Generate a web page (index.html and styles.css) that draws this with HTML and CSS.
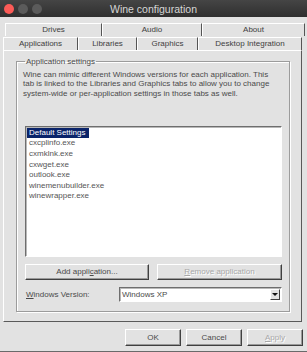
FILE: index.html
```html
<!DOCTYPE html>
<html lang="en">
<head>
    <meta charset="UTF-8">
    <meta name="viewport" content="width=device-width, initial-scale=1.0">
    <title>Wine configuration</title>
    <link rel="stylesheet" href="styles.css">
</head>
<body>
    <div class="window">
        <div class="titlebar">
            <div class="lights">
                <span class="light close"></span>
                <span class="light"></span>
                <span class="light"></span>
            </div>
            <div class="title">Wine configuration</div>
            <div></div>
        </div>

        <div class="tabs">
            <div class="tab-row back">
                <div class="tab drives">Drives</div>
                <div class="tab audio">Audio</div>
                <div class="tab about">About</div>
            </div>
            <div class="tab-row front">
                <div class="tab active applications">Applications</div>
                <div class="tab libraries">Libraries</div>
                <div class="tab graphics">Graphics</div>
                <div class="tab desktop">Desktop Integration</div>
            </div>
        </div>

        <div class="panel">
            <fieldset class="group">
                <legend>Application settings</legend>
                <p class="desc">Wine can mimic different Windows versions for each application. This<br>tab is linked to the Libraries and Graphics tabs to allow you to change<br>system-wide or per-application settings in those tabs as well.</p>
                <ul class="app-list">
                    <li><span class="selected">Default Settings</span></li>
                    <li><span>cxcplinfo.exe</span></li>
                    <li><span>cxmklnk.exe</span></li>
                    <li><span>cxwget.exe</span></li>
                    <li><span>outlook.exe</span></li>
                    <li><span>winemenubuilder.exe</span></li>
                    <li><span>winewrapper.exe</span></li>
                </ul>
                <div class="app-buttons">
                    <button class="btn add">Add appli<u>c</u>ation...</button>
                    <button class="btn remove" disabled><u>R</u>emove application</button>
                </div>
                <div class="version-row">
                    <label><u>W</u>indows Version:</label>
                    <div class="combo">
                        <span class="combo-value">Windows XP</span>
                        <span class="combo-arrow"></span>
                    </div>
                </div>
            </fieldset>
        </div>

        <div class="dialog-buttons">
            <button class="btn ok">OK</button>
            <button class="btn cancel">Cancel</button>
            <button class="btn apply" disabled><u>A</u>pply</button>
        </div>
    </div>
</body>
</html>
```

FILE: styles.css
```css
body {
    margin: 0;
    background: #e2e2e2;
    font-family: "Liberation Sans", Arial, sans-serif;
    font-size: 8px;
    color: #4a4a4a;
}

.window {
    width: 307px;
    height: 352px;
    box-sizing: border-box;
    background: #e2e2e2;
    border-bottom: 1px solid #6a6a6a;
    display: flex;
    flex-direction: column;
}

/* title bar */
.titlebar {
    height: 17px;
    display: grid;
    grid-template-columns: 1fr auto 1fr;
    align-items: center;
    background: linear-gradient(#454545, #2f2f2f);
}

.lights {
    display: flex;
    gap: 4px;
    padding-left: 4px;
}

.light {
    width: 10px;
    height: 10px;
    border-radius: 50%;
    background: #5b5b5b;
}

.light.close { background: #fc5b57; }

.title {
    font-size: 10.5px;
    color: #d6d6d6;
}

/* tabs */
.tabs {
    padding-top: 6px;
}

.tab-row {
    display: flex;
    height: 13px;
}

.tab-row.back { margin: 0 2px 0 5px; }
.tab-row.front { margin: 1px 5px 0 3px; }

.tab {
    box-sizing: border-box;
    border-top: 1px solid #fff;
    border-left: 1px solid #fff;
    border-right: 1px solid #555;
    text-align: center;
    line-height: 12px;
    color: #404040;
}

.drives { width: 97px; }
.audio { width: 100px; }
.about { width: 103px; }
.applications { width: 75px; }
.libraries { width: 59px; }
.graphics { width: 61px; }
.desktop { width: 104px; }

/* panel */
.panel {
    margin: 0 5px 0 3px;
    height: 272px;
    box-sizing: border-box;
    border: 1px solid;
    border-color: #fff #5a5a5a #5a5a5a #fff;
}

.group {
    margin: 6px 11px 0 12px;
    padding: 0 6px;
    height: 255px;
    box-sizing: border-box;
    border: 1px solid #9c9c9c;
    box-shadow: inset 1px 1px 0 #fff, 1px 1px 0 #fff;
}

.group legend {
    margin-left: 2px;
    padding: 0 1px;
    line-height: 9px;
}

.desc {
    margin: 4px 0 0;
    line-height: 9.3px;
}

.app-list {
    list-style: none;
    margin: 28px 1px 0 2px;
    padding: 1px 0 0;
    height: 131px;
    box-sizing: border-box;
    background: #fff;
    border: 1px solid;
    border-color: #6e6e6e #fff #fff #6e6e6e;
    box-shadow: inset 1px 1px 0 #b8b8b8;
    color: #555;
}

.app-list li {
    height: 10.6px;
    line-height: 10.6px;
    padding-left: 1px;
}

.app-list span {
    display: inline-block;
    padding: 0 2px;
}

.app-list .selected {
    padding-right: 4px;
    background: #0a246a;
    color: #fff;
}

/* buttons */
.btn {
    box-sizing: border-box;
    margin: 0;
    padding: 0;
    font: inherit;
    color: #4a4a4a;
    background: #e2e2e2;
    border: 1px solid;
    border-color: #fff #404040 #404040 #fff;
    box-shadow: inset -1px -1px 0 #9a9a9a;
}

.btn:disabled {
    color: #a8a8a8;
    text-shadow: 1px 1px 0 #fff;
}

.app-buttons {
    display: flex;
    gap: 8px;
    margin: 7px 1px 0 2px;
}

.add { width: 124px; height: 16px; }
.remove { width: 125px; height: 16px; }

.version-row {
    display: flex;
    align-items: center;
    margin: 7px 1px 0 3px;
}

.version-row label {
    width: 93px;
}

.combo {
    flex: 1;
    height: 15px;
    box-sizing: border-box;
    display: flex;
    align-items: center;
    justify-content: space-between;
    background: #fff;
    border: 1px solid;
    border-color: #6e6e6e #fff #fff #6e6e6e;
    box-shadow: inset 1px 1px 0 #b8b8b8;
    padding: 1px 1px 1px 2px;
}

.combo-arrow {
    width: 10px;
    height: 11px;
    box-sizing: border-box;
    background: #e2e2e2;
    border: 1px solid;
    border-color: #fff #404040 #404040 #fff;
    display: flex;
    align-items: center;
    justify-content: center;
}

.combo-arrow::after {
    content: "";
    border-left: 3px solid transparent;
    border-right: 3px solid transparent;
    border-top: 3px solid #111;
}

.dialog-buttons {
    display: flex;
    justify-content: flex-end;
    gap: 5px;
    margin: 7px 4px 0 0;
}

.dialog-buttons .btn {
    width: 56px;
    height: 17px;
}
```
